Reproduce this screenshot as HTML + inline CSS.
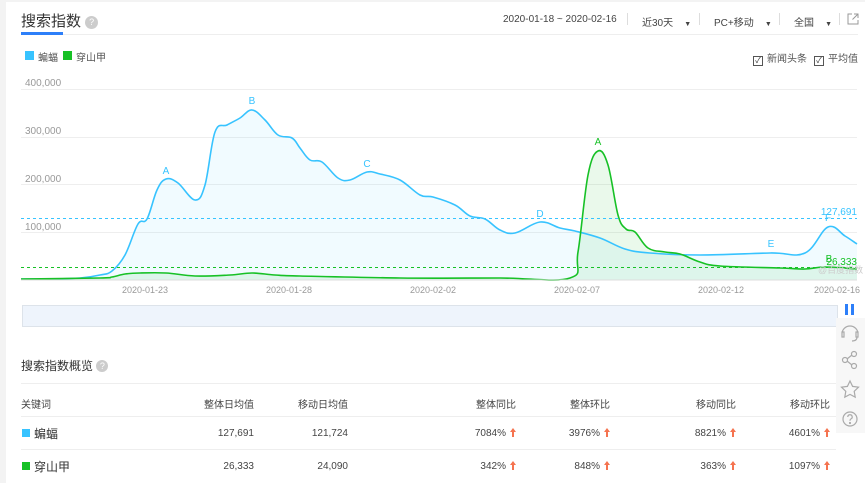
<!DOCTYPE html>
<html><head><meta charset="utf-8">
<style>
*{margin:0;padding:0;box-sizing:border-box}
body{width:865px;height:483px;background:#f3f3f3;font-family:"Liberation Sans","Noto Sans CJK SC",sans-serif;overflow:hidden;position:relative}
.card{position:absolute;left:6px;top:2px;width:859px;height:481px;background:#fff}
.a{position:absolute;white-space:nowrap}
.t{font-size:12px;color:#333}
.g{color:#999;font-size:10px}
.r{text-align:right}
.line{position:absolute;height:1px;background:#eee}
.q{display:inline-block;width:12px;height:12px;border-radius:50%;background:#ccc;color:#fff;font-size:9px;text-align:center;line-height:12px;vertical-align:1px}
.arr{display:inline-block;margin-left:4px;vertical-align:-1px}
.cb{display:inline-block;width:10px;height:10px;border:1px solid #555;font-size:8px;line-height:8px;text-align:center;vertical-align:-1px;margin-right:4px;color:#333}
.sep{position:absolute;top:13px;width:1px;height:12px;background:#ddd}
</style></head><body>
<div class="card"></div>
<div class="a" style="left:21px;top:10px;font-size:15px;color:#333">搜索指数 <span class="q" style="width:13px;height:13px;line-height:13px">?</span></div>
<div class="a" style="left:21px;top:32px;width:42px;height:3px;background:#2d7ff9"></div>
<div class="line" style="left:63px;top:34px;width:795px;background:#eee"></div>
<div class="a" style="left:503px;top:14px;font-size:10px;color:#444">2020-01-18 ~ 2020-02-16</div>
<div class="sep" style="left:627px"></div>
<div class="a" style="left:642px;top:14px;font-size:10px;color:#444">近30天 &nbsp;&nbsp;&nbsp;<span style="font-size:7px">▼</span></div>
<div class="sep" style="left:699px"></div>
<div class="a" style="left:714px;top:14px;font-size:10px;color:#444">PC+移动 &nbsp;&nbsp;&nbsp;<span style="font-size:7px">▼</span></div>
<div class="sep" style="left:779px"></div>
<div class="a" style="left:794px;top:14px;font-size:10px;color:#444">全国 &nbsp;&nbsp;&nbsp;<span style="font-size:7px">▼</span></div>
<div class="sep" style="left:839px"></div>
<svg class="a" style="left:847px;top:13px" width="12" height="12" viewBox="0 0 12 12"><path d="M5 1H1v10h10V7M7 1h4v4M11 1 5.5 6.5" fill="none" stroke="#999" stroke-width="1"/></svg>

<div class="a" style="left:25px;top:51px;width:9px;height:9px;background:#37c3ff"></div>
<div class="a t" style="left:38px;top:49px;font-size:10px;color:#555">蝙蝠</div>
<div class="a" style="left:63px;top:51px;width:9px;height:9px;background:#17c126"></div>
<div class="a t" style="left:76px;top:49px;font-size:10px;color:#555">穿山甲</div>
<div class="a t" style="left:753px;top:50px;font-size:10px;color:#555"><span class="cb">✓</span>新闻头条</div>
<div class="a t" style="left:814px;top:50px;font-size:10px;color:#555"><span class="cb">✓</span>平均值</div>

<div class="a g" style="left:25px;top:78px">400,000</div>
<div class="a g" style="left:25px;top:126px">300,000</div>
<div class="a g" style="left:25px;top:174px">200,000</div>
<div class="a g" style="left:25px;top:222px">100,000</div>

<svg class="a" style="left:0;top:0" width="865" height="300" id="ch">
<g stroke="#eee" stroke-width="1">
<line x1="21" y1="89.5" x2="857" y2="89.5"/><line x1="21" y1="137.5" x2="857" y2="137.5"/>
<line x1="21" y1="184.5" x2="857" y2="184.5"/><line x1="21" y1="232.5" x2="857" y2="232.5"/>
</g>
<path id="bf" fill="#37c3ff" fill-opacity="0.07"/>
<path id="gf" fill="#17c126" fill-opacity="0.09"/>
<path id="bl" fill="none" stroke="#37c3ff" stroke-width="1.6"/>
<path id="gl" fill="none" stroke="#17c126" stroke-width="1.6"/>
<line x1="21" y1="218.5" x2="857" y2="218.5" stroke="#37c3ff" stroke-dasharray="3,3"/>
<line x1="21" y1="267.5" x2="857" y2="267.5" stroke="#17c126" stroke-dasharray="3,3"/>
<line x1="21" y1="280" x2="857" y2="280" stroke="#ddd"/>
<g font-family="Liberation Sans,sans-serif" font-size="10" fill="#37c3ff" text-anchor="middle">
<text x="166" y="174">A</text><text x="252" y="104">B</text><text x="367" y="167">C</text><text x="540" y="217">D</text><text x="771" y="247">E</text><text x="828" y="221">F</text>
<text x="857" y="215" text-anchor="end">127,691</text>
</g>
<g font-family="Liberation Sans,sans-serif" font-size="10" fill="#17c126" text-anchor="middle">
<text x="598" y="145">A</text><text x="829" y="262">B</text><text x="857" y="265" text-anchor="end">26,333</text>
</g>
<text x="818" y="273" font-size="9" fill="#ccc" font-family="Liberation Sans,Noto Sans CJK SC,sans-serif">@百度指数</text>
<g font-family="Liberation Sans,sans-serif" font-size="9" fill="#999" text-anchor="middle">
<text x="145" y="293">2020-01-23</text><text x="289" y="293">2020-01-28</text><text x="433" y="293">2020-02-02</text><text x="577" y="293">2020-02-07</text><text x="721" y="293">2020-02-12</text><text x="837" y="293">2020-02-16</text>
</g>
</svg>

<div class="a" style="left:22px;top:305px;width:816px;height:22px;background:#eef4fc;border:1px solid #dde3ea"></div>
<div class="a" style="left:845px;top:304px;width:3px;height:11px;background:#2d7ff9"></div>
<div class="a" style="left:851px;top:304px;width:3px;height:11px;background:#2d7ff9"></div>
<div class="a" style="left:836px;top:318px;width:29px;height:115px;background:#f7f7f7"></div>
<svg class="a" style="left:838px;top:320px" width="24" height="112" viewBox="0 0 24 112" fill="none" stroke="#aaa" stroke-width="1.2">
<path d="M4 14a8 8 0 0 1 16 0M4 12v5h2v-5zM18 12v5h2v-5zM19 17q0 4-5 4"/>
<circle cx="7" cy="40" r="2.5"/><circle cx="16" cy="34" r="2.5"/><circle cx="16" cy="46" r="2.5"/><path d="M9 39l5-4M9 41l5 4"/>
<path d="M12 61l2.6 5.4 5.9.8-4.3 4.1 1 5.9-5.2-2.8-5.2 2.8 1-5.9-4.3-4.1 5.9-.8z"/>
<circle cx="12" cy="99" r="7"/><path d="M9.8 97a2.2 2.2 0 1 1 3 2c-.8.4-.8 1-.8 1.8"/><circle cx="12" cy="103" r=".5" fill="#aaa"/>
</svg>

<div class="a" style="left:21px;top:357px;font-size:12px;color:#333">搜索指数概览 <span class="q">?</span></div>
<div class="line" style="left:21px;top:383px;width:815px"></div>
<div class="a" style="left:21px;top:396px;font-size:10px;color:#444">关键词</div>
<div class="a r" style="left:154px;width:100px;top:396px;font-size:10px;color:#444">整体日均值</div>
<div class="a r" style="left:248px;width:100px;top:396px;font-size:10px;color:#444">移动日均值</div>
<div class="a r" style="left:416px;width:100px;top:396px;font-size:10px;color:#444">整体同比</div>
<div class="a r" style="left:510px;width:100px;top:396px;font-size:10px;color:#444">整体环比</div>
<div class="a r" style="left:636px;width:100px;top:396px;font-size:10px;color:#444">移动同比</div>
<div class="a r" style="left:730px;width:100px;top:396px;font-size:10px;color:#444">移动环比</div>
<div class="line" style="left:21px;top:416px;width:815px"></div>
<div class="a" style="left:22px;top:429px;width:8px;height:8px;background:#37c3ff"></div>
<div class="a" style="left:34px;top:425px;font-size:12px;color:#333">蝙蝠</div>
<div class="line" style="left:21px;top:449px;width:815px"></div>
<div class="a" style="left:22px;top:462px;width:8px;height:8px;background:#17c126"></div>
<div class="a" style="left:34px;top:458px;font-size:12px;color:#333">穿山甲</div>

<div class="a r" style="left:154px;width:100px;top:428px;font-size:10px;color:#444">127,691</div>
<div class="a r" style="left:248px;width:100px;top:428px;font-size:10px;color:#444">121,724</div>
<div class="a r" style="left:416px;width:100px;top:428px;font-size:10px;color:#444">7084%<svg class="arr" width="6" height="9"><path d="M3 0L6 4H4V9H2V4H0Z" fill="#f5734f"/></svg></div>
<div class="a r" style="left:510px;width:100px;top:428px;font-size:10px;color:#444">3976%<svg class="arr" width="6" height="9"><path d="M3 0L6 4H4V9H2V4H0Z" fill="#f5734f"/></svg></div>
<div class="a r" style="left:636px;width:100px;top:428px;font-size:10px;color:#444">8821%<svg class="arr" width="6" height="9"><path d="M3 0L6 4H4V9H2V4H0Z" fill="#f5734f"/></svg></div>
<div class="a r" style="left:730px;width:100px;top:428px;font-size:10px;color:#444">4601%<svg class="arr" width="6" height="9"><path d="M3 0L6 4H4V9H2V4H0Z" fill="#f5734f"/></svg></div>

<div class="a r" style="left:154px;width:100px;top:461px;font-size:10px;color:#444">26,333</div>
<div class="a r" style="left:248px;width:100px;top:461px;font-size:10px;color:#444">24,090</div>
<div class="a r" style="left:416px;width:100px;top:461px;font-size:10px;color:#444">342%<svg class="arr" width="6" height="9"><path d="M3 0L6 4H4V9H2V4H0Z" fill="#f5734f"/></svg></div>
<div class="a r" style="left:510px;width:100px;top:461px;font-size:10px;color:#444">848%<svg class="arr" width="6" height="9"><path d="M3 0L6 4H4V9H2V4H0Z" fill="#f5734f"/></svg></div>
<div class="a r" style="left:636px;width:100px;top:461px;font-size:10px;color:#444">363%<svg class="arr" width="6" height="9"><path d="M3 0L6 4H4V9H2V4H0Z" fill="#f5734f"/></svg></div>
<div class="a r" style="left:730px;width:100px;top:461px;font-size:10px;color:#444">1097%<svg class="arr" width="6" height="9"><path d="M3 0L6 4H4V9H2V4H0Z" fill="#f5734f"/></svg></div>

<script>
var B=[[21,279],[50,279],[80,278],[100,275],[112,271],[125,255],[138,224],[147,219],[157,190],[166,179],[178,183],[195,200],[205,185],[215,132],[227,125],[240,118],[252,110],[265,120],[278,135],[292,138],[300,148],[310,160],[322,162],[338,178],[350,180],[367,172],[380,174],[400,180],[420,195],[433,197],[455,205],[470,216],[485,219],[500,230],[515,233],[540,222],[560,228],[575,231],[600,238],[625,249],[650,253],[700,255],[770,253],[805,253],[828,227],[845,236],[857,244]];
var G=[[21,279],[100,278],[112,277],[125,274],[140,273],[166,273],[195,276],[230,275],[252,273],[275,275],[300,276],[400,278],[500,278],[570,278],[578,252],[588,175],[598,151],[608,165],[618,215],[626,229],[635,232],[648,248],[665,252],[680,254],[700,262],[720,266],[780,268],[805,269],[825,267],[857,269]];
function sp(p){var d="M"+p[0][0]+","+p[0][1];for(var i=0;i<p.length-1;i++){var a=p[i-1]||p[i],b=p[i],c=p[i+1],e=p[i+2]||c;var t=0.18;d+=" C"+(b[0]+(c[0]-a[0])*t).toFixed(1)+","+(b[1]+(c[1]-a[1])*t).toFixed(1)+" "+(c[0]-(e[0]-b[0])*t).toFixed(1)+","+(c[1]-(e[1]-b[1])*t).toFixed(1)+" "+c[0]+","+c[1];}return d;}
var bd=sp(B),gd=sp(G);
document.getElementById("bl").setAttribute("d",bd);
document.getElementById("gl").setAttribute("d",gd);
document.getElementById("bf").setAttribute("d",bd+" L857,280 L21,280Z");
document.getElementById("gf").setAttribute("d",gd+" L857,280 L21,280Z");
</script>
</body></html>
